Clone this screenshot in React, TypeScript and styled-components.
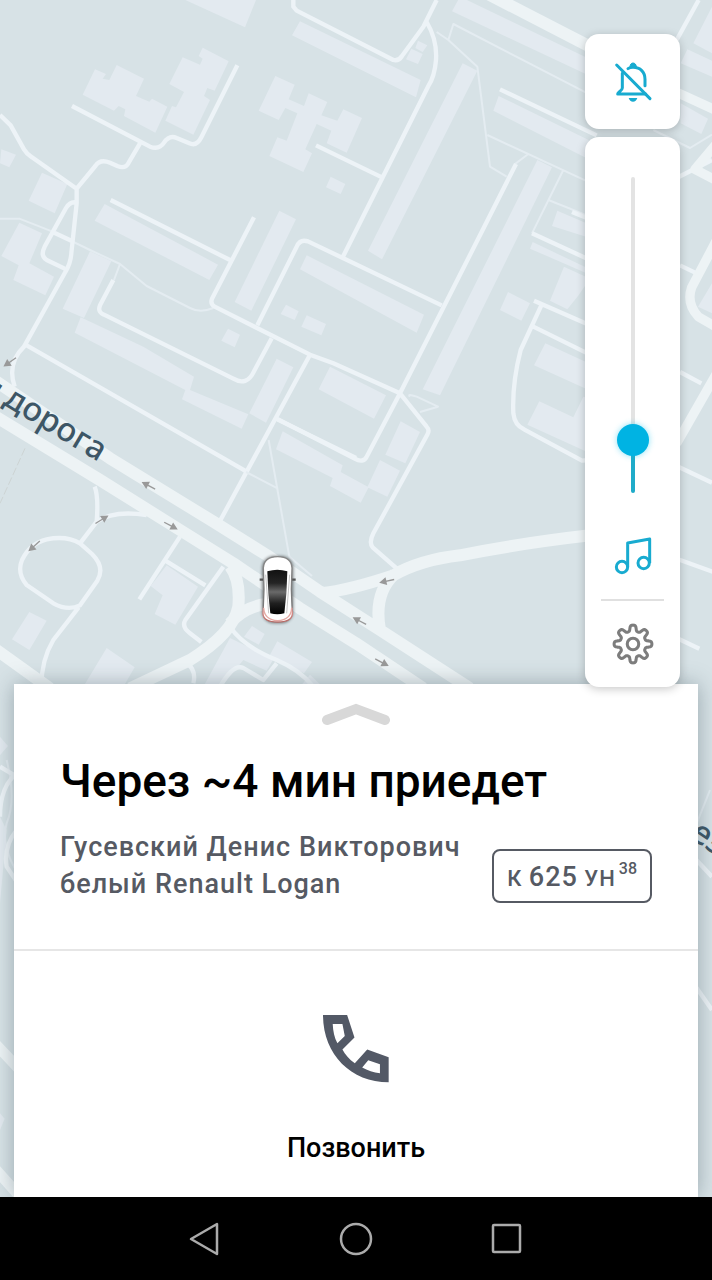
import React, { useState } from 'react';
import styled, { createGlobalStyle } from 'styled-components';

const GlobalStyle = createGlobalStyle`
  *, *::before, *::after { box-sizing: border-box; }
  body {
    margin: 0;
    background: #d7e2e6;
    font-family: Roboto, "Noto Sans", sans-serif;
    -webkit-font-smoothing: antialiased;
  }
  button { font: inherit; color: inherit; }
`;

const Screen = styled.div`
  position: relative;
  display: flex;
  flex-direction: column;
  min-height: 100vh;
  overflow: hidden;
`;

const MapCanvas = styled.svg`
  position: absolute;
  inset: 0;
  width: 100%;
  height: 100%;
  background: #d7e2e6;
`;

const Controls = styled.aside`
  position: relative;
  z-index: 2;
  flex: 1;
  display: flex;
  flex-direction: column;
  align-items: flex-end;
  gap: 8px;
  padding: 34px 32px 0;
`;

const FloatingCard = styled.div`
  display: flex;
  flex-direction: column;
  align-items: center;
  width: 95px;
  border-radius: 14px;
  background: #fff;
  box-shadow: 0 2px 10px rgba(0, 0, 0, 0.22);
`;

const IconButton = styled.button<{ $height: number; $color: string }>`
  display: flex;
  align-items: center;
  justify-content: center;
  width: 100%;
  height: ${(p) => p.$height}px;
  padding: 0;
  border: 0;
  background: none;
  color: ${(p) => p.$color};
  cursor: pointer;
`;

const SliderSlot = styled.div`
  padding: 40px 0 19px;
  display: flex;
`;

const VolumeSlider = styled.input`
  appearance: none;
  writing-mode: vertical-lr;
  direction: rtl;
  width: 33px;
  height: 316px;
  margin: 0;
  background: none;
  cursor: pointer;

  &::-webkit-slider-runnable-track {
    width: 4px;
    height: 100%;
    border-radius: 2px;
    background: linear-gradient(to top, #1fabc9 var(--level), #e3e3e3 var(--level));
  }
  &::-webkit-slider-thumb {
    appearance: none;
    width: 32px;
    height: 32px;
    margin-left: -14px;
    border-radius: 50%;
    background: #00b3e3;
    box-shadow: 0 0 6px rgba(0, 190, 235, 0.45);
  }
`;

const CardDivider = styled.hr`
  width: 63px;
  height: 2px;
  margin: 0;
  border: 0;
  background: #e0e0e0;
`;

const Sheet = styled.main`
  position: relative;
  z-index: 1;
  margin: -4px 14px 0;
  background: #fff;
  box-shadow: 0 0 20px rgba(60, 80, 90, 0.4);
`;

const Summary = styled.section`
  display: flex;
  flex-direction: column;
  padding: 0 46px 46px;
  border-bottom: 2px solid #e6e6e6;
`;

const ExpandButton = styled.button`
  display: flex;
  align-self: center;
  padding: 18px 0 26px;
  border: 0;
  background: none;
  cursor: pointer;
`;

const Title = styled.h1`
  margin: 0;
  font-size: 46px;
  line-height: 56px;
  font-weight: 500;
  color: #000;
`;

const DetailsRow = styled.div`
  display: flex;
  align-items: flex-end;
  justify-content: space-between;
  gap: 16px;
  margin-top: 20px;
  color: #565a63;
`;

const Driver = styled.p`
  margin: 0;
  font-size: 27px;
  line-height: 37px;
  font-weight: 500;
  letter-spacing: 1px;
`;

const Plate = styled.div`
  display: flex;
  flex: none;
  gap: 3px;
  height: 54px;
  padding: 0 13px;
  border: 2px solid #565a63;
  border-radius: 8px;
  font-size: 27px;
  line-height: 52px;
  font-weight: 500;
  letter-spacing: 1px;
`;

const PlateLetters = styled.span`
  font-size: 22px;
  text-transform: uppercase;
  white-space: pre;
`;

const Region = styled.span`
  font-size: 16px;
  line-height: 36px;
  letter-spacing: 0;
`;

const CallButton = styled.button`
  display: flex;
  flex-direction: column;
  align-items: center;
  gap: 49px;
  width: 100%;
  padding: 64px 0 33px;
  border: 0;
  background: none;
  font-size: 27px;
  line-height: 32px;
  font-weight: 500;
  color: #000;
  cursor: pointer;
`;

const SystemBar = styled.nav`
  position: relative;
  z-index: 2;
  display: flex;
  justify-content: center;
  height: 83px;
  background: #000;
`;

const SystemButton = styled.button`
  display: flex;
  align-items: center;
  justify-content: center;
  width: 151px;
  padding: 0;
  border: 0;
  background: none;
  color: #ababab;
  cursor: pointer;
`;

const BellOffIcon = () => (
  <svg width="40" height="40" viewBox="98 94 120 120" fill="none" stroke="currentColor" strokeWidth="9" strokeLinecap="round" strokeLinejoin="round" aria-hidden="true">
    <path d="M109 103 209 204" strokeWidth="9" />
    <path d="M126 128v44c0 8-14 12-14 18h84" />
    <path d="M194 165v-19c0-22-14-36-36-36-6 0-11 1-15 4" />
    <path d="M149 108c0-7 4-11 9-11s10 4 10 11z" fill="currentColor" strokeWidth="3" />
    <path d="M145 202h26c-2 7-7 11-13 11s-11-4-13-11z" fill="currentColor" stroke="none" />
  </svg>
);

const MusicIcon = () => (
  <svg width="40" height="40" viewBox="99 408 120 120" fill="none" stroke="currentColor" strokeWidth="9" strokeLinejoin="round" aria-hidden="true">
    <circle cx="126" cy="501" r="17" />
    <circle cx="191" cy="489" r="17" />
    <path d="M143 501v-72l66-12v72" />
  </svg>
);

const gearOutline = Array.from({ length: 160 }, (_, i) => {
  const angle = (i / 160) * Math.PI * 2;
  const radius = 47 + 9 * Math.tanh(2 * Math.cos(8 * angle));
  return `${(62 + radius * Math.sin(angle)).toFixed(1)},${(62 - radius * Math.cos(angle)).toFixed(1)}`;
}).join(' ');

const GearIcon = () => (
  <svg width="42" height="42" viewBox="0 0 124 124" fill="none" stroke="currentColor" strokeWidth="9" strokeLinejoin="round" aria-hidden="true">
    <polygon points={gearOutline} />
    <circle cx="62" cy="62" r="17" />
  </svg>
);

const PhoneIcon = () => (
  <svg width="67" height="68" viewBox="130 226 200 203" fill="currentColor" fillRule="evenodd" color="#535966" aria-hidden="true">
    <path d="M130 226h72l22 67-36 36c8 16 20 29 37 41l37-41 64 23v75C213 427 130 343 130 226ZM159 253c1 22 5 41 14 57l22-21-7-36ZM247 383c16 9 34 15 53 17v-27l-35-12Z" />
  </svg>
);

type Tile = {
  x: number;
  y: number;
  avenueWidth: number;
  buildings: string[];
  lanes: string[];
  streets: string[];
  avenues: string[];
};

/* Map geometry, grouped by district; coordinates are local to each district's origin. */
const districts: Tile[] = [
  {
    x: 0,
    y: 0,
    avenueWidth: 36,
    buildings: [
      'M556 0 735 82 768 0Z',
      'M285 208 318 222 308 236 328 240 350 195 432 236 408 288 448 305 456 296 502 320 466 398 372 348 376 328 356 318 342 332 248 284Z',
      'M548 172 600 194 608 176 596 168 608 143 686 184 644 272 622 264 612 288 630 300 580 404 496 362 516 318 528 322 552 276 508 252Z',
      'M826 228 884 254 866 298 912 318 926 280 982 306 964 346 1012 362 1030 328 1086 354 1040 458 980 430 994 392 950 372 916 448 936 460 910 516 808 468 832 412 860 422 892 340 856 324 836 360 776 332Z',
      'M992 530 1036 552 1022 582 978 562Z',
      'M4 448 48 464 28 502 0 490Z',
      'M126 518 202 552 164 640 86 602Z',
      'M58 668 126 700 88 790 162 830 136 886 40 840 56 796 4 768Z',
      'M314 612 654 794 628 840 284 662Z',
      'M838 632 888 658 754 932 704 906Z',
      'M270 754 334 784 252 954 188 926Z',
      'M242 952 430 1040 582 1130 570 1170 745 1243 725 1286 546 1198 556 1170 224 998Z',
      'M858 914 896 934 884 960 842 942Z',
      'M920 946 978 972 964 1006 904 980Z',
      'M684 986 720 1004 704 1042 664 1022Z',
    ],
    lanes: ['M0 656h58L150 692 270 750 360 792 440 858 570 924Q600 940 640 924', 'M360 792 342 840', 'M1310 96 1345 120 1360 72 1770 284', 'M1345 120 1432 200 1470 500 1520 530', 'M1462 405 1770 548', 'M1545 492 1585 462', 'M1690 510 1596 700', 'M1645 600 1770 650'],
    streets: [
      'M0 345 32 376 72 448Q80 462 96 472L230 566V610L214 760Q212 790 196 816L72 1040Q20 1090 44 1160',
      'M230 566 286 498Q300 476 330 488L352 498Q376 508 386 488L420 430',
      'M216 318 450 440Q478 450 492 428 508 404 530 414L568 430Q590 440 604 412L712 196',
      'M228 607Q210 604 198 624L134 740Q120 768 140 780L194 806',
      'M158 696 214 722',
      'M332 600 690 780',
      'M762 652 636 896Q630 912 644 920L930 1064 1000 1090 1200 1180 1280 1280Q1290 1290 1282 1304L1120 1600Q1106 1628 1118 1642L1190 1705',
      'M772 976 890 740Q900 716 924 724L1325 916',
      'M340 840 300 916Q292 936 312 944L700 1136Q740 1160 762 1114L815 1015',
      'M1030 768 1284 260Q1304 230 1308 180 1312 120 1280 66',
      'M880 0V20L890 32 1180 180Q1196 184 1206 168L1270 80 1310 0',
      'M948 436 1146 532',
      'M1548 492 1200 1180 1100 1370Q1090 1390 1064 1376L830 1256',
      'M1500 268 1790 406',
      'M930 1064 655 1572',
      'M80 1036 740 1415',
    ],
    avenues: ['M1460 -20 1770 140'],
  },
  {
    x: 900,
    y: 0,
    avenueWidth: 28,
    buildings: [
      'M0 64 362 240 348 292 -24 106Z',
      'M480 -10 870 178 870 228 456 34Z',
      'M488 190 532 212 246 778 204 752Z',
      'M712 480 756 502 420 1186 368 1168Z',
      'M596 288 866 420 866 478 580 332Z',
      'M20 766 372 944 350 998 0 808Z',
      'M354 122 382 136 368 156 346 144Z',
      'M334 146 368 162 354 192 318 178Z',
      'M772 632 870 674 870 714 756 678Z',
      'M698 726 870 808 870 824 690 746Z',
      'M792 800 870 836 834 888 802 928 750 902Z',
      'M624 876 690 910 664 962 600 930Z',
      'M736 1030 866 1090 866 1170 702 1096Z',
      'M718 1204 820 1252 850 1190 870 1198V1360L682 1274Z',
      'M1236 20V160L1180 130Z',
      'M1162 148 1236 182V230L1142 190Z',
      'M1142 310 1224 356 1204 402 1142 370Z',
      'M1236 850V940L1194 920Z',
      'M90 1100 258 1186 222 1256 56 1168Z',
      'M302 1264 360 1296 316 1390 256 1364Z',
      'M240 1380 300 1412 262 1490 202 1462Z',
      'M-52 1294 128 1396 122 1416 206 1462 182 1508 90 1458 98 1434 -72 1348Z',
    ],
    lanes: ['M1060 390 1170 444 1236 404', 'M330 1190Q320 1180 350 1190L414 1220 360 1236'],
    streets: [
      'M1196 0 1130 120',
      'M816 636 870 658',
      'M696 700 870 780',
      'M702 902 870 976',
      'M725 914 662 1050Q636 1150 640 1240 644 1276 672 1288L846 1382 870 1380',
      'M700 980 870 1064',
      'M1130 534 1236 480',
      'M1140 796 1190 820',
      'M1140 1116 1204 1150',
      'M1130 1398 1236 1448',
      'M1130 1676 1240 1716',
      'M1130 1914 1198 1946',
    ],
    avenues: ['M1120 272 1250 332', 'M1250 430 1185 508 1250 542', 'M1250 720 1175 862Q1158 910 1195 950L1250 982', 'M1250 1120 1130 1330'],
  },
  {
    x: 0,
    y: 990,
    avenueWidth: 36,
    buildings: [
      'M830 86 880 112 798 278 748 250Z',
      'M500 706 594 770 526 884 464 852 488 796 452 768Z',
      'M88 846 140 872 88 960 36 928Z',
      'M320 954 404 1012 370 1070H250Z',
      'M690 924 820 988 800 1022 730 990 664 1070H610Z',
      'M756 888 794 912 776 944 732 920Z',
      'M832 934 936 996 912 1030 808 978Z',
      'M930 1034 968 1070H900Z',
    ],
    lanes: ['M806 330 868 680 936 738', 'M738 426 834 476'],
    streets: [
      'M832 268 1068 384',
      'M284 470Q296 500 290 575L240 640',
      'M290 575Q340 540 440 555',
      'M240 640Q200 616 140 628 90 640 66 690 50 730 80 765L160 820Q204 844 240 826L292 752Q316 712 276 672L240 640',
      'M236 832 160 930Q124 990 124 1070',
      'M540 620 418 808',
      'M496 692 616 766',
      'M670 710 556 870Q544 890 570 910L604 936',
      'M690 890Q730 950 830 990 900 1020 940 1070',
      'M830 1000 790 1050 730 1014Q700 1000 660 1070',
      'M560 1000Q590 1020 580 1060',
    ],
    avenues: [
      'M-10 155 330 385 640 575 800 675 960 785 1140 900 1410 1075',
      'M-10 262 300 450 540 600 700 700 900 835 1068 940 1270 1075',
      'M-10 960 150 1075',
      'M390 1075 570 990Q700 910 715 830 722 750 690 708',
      'M690 880Q740 820 830 820',
      'M960 790Q1050 780 1180 736 1260 690 1380 676 1560 640 1770 616',
      'M1184 732Q1120 790 1140 900',
    ],
  },
  {
    x: 0,
    y: 2070,
    avenueWidth: 32,
    buildings: ['M0 140 24 168 0 196Z', 'M0 380 20 420 0 640Z', 'M0 1270 14 1286 0 1320Z'],
    lanes: ['M20 210Q50 330 20 400 0 470 60 560', 'M2130 300 2090 400'],
    streets: ['M0 230 50 260', 'M50 250Q0 290 0 380', 'M50 420Q10 470 20 530L60 590', 'M2080 500 2136 560', 'M2080 880 2136 960'],
    avenues: ['M-20 1055 60 1140', 'M-20 1430 60 1520'],
  },
];

const directionArrows = [
  { x: 30, y: 1086, angle: 145 },
  { x: 446, y: 1457, angle: 208 },
  { x: 512, y: 1577, angle: 28 },
  { x: 305, y: 1559, angle: -32 },
  { x: 103, y: 1638, angle: 138 },
  { x: 1161, y: 1743, angle: 168 },
  { x: 1079, y: 1863, angle: 208 },
  { x: 1145, y: 1987, angle: 28 },
];

const CityMap = () => (
  <MapCanvas viewBox="0 0 2136 3840" preserveAspectRatio="xMidYMin slice" role="img" aria-label="Карта">
    <defs>
      <linearGradient id="glass" x1="0" y1="0" x2="0" y2="1">
        <stop offset="0" stopColor="#111" />
        <stop offset="0.3" stopColor="#242424" />
        <stop offset="0.5" stopColor="#6a6a6a" />
        <stop offset="0.75" stopColor="#202020" />
        <stop offset="1" stopColor="#000" />
      </linearGradient>
      <linearGradient id="body" x1="0" y1="0" x2="0" y2="1">
        <stop offset="0" stopColor="#888" />
        <stop offset="0.75" stopColor="#777" />
        <stop offset="0.85" stopColor="#d98a86" />
        <stop offset="1" stopColor="#b56a66" />
      </linearGradient>
      <filter id="carShadow" x="-30%" y="-20%" width="160%" height="140%">
        <feGaussianBlur stdDeviation="5" />
      </filter>
    </defs>
    <g fill="#e3eaf0">
      {districts.map((d) => (
        <path key={`${d.x}-${d.y}`} transform={`translate(${d.x} ${d.y})`} d={d.buildings.join('')} />
      ))}
    </g>
    <g fill="none" stroke="#edf3f7" strokeLinejoin="round">
      {districts.map((d) => (
        <g key={`${d.x}-${d.y}`} transform={`translate(${d.x} ${d.y})`}>
          <path d={d.lanes.join('')} stroke="#e4ecf1" strokeWidth="6" />
          <path d={d.streets.join('')} strokeWidth="13" />
          <path d={d.avenues.join('')} stroke="#edf3f5" strokeWidth={d.avenueWidth} />
        </g>
      ))}
    </g>
    <path d="M75 1345 0 1510" stroke="#cdd4d4" strokeWidth="3" strokeDasharray="24 8" />
    <g stroke="#999" fill="#999" strokeWidth="4">
      {directionArrows.map((a) => (
        <g key={`${a.x}-${a.y}`} transform={`translate(${a.x} ${a.y}) rotate(${a.angle})`}>
          <path d="M-22 0H8" />
          <path d="M2-12 24 0 2 12Z" stroke="none" />
        </g>
      ))}
    </g>
    <g fill="#3d5666" fontFamily="'Noto Sans', sans-serif" fontSize="98" fontWeight="500">
      <text transform="translate(-16 1206) rotate(34)" textAnchor="end">я</text>
      <text transform="translate(296 1386) rotate(31)" textAnchor="end">дорога</text>
      <text transform="translate(2066 2512) rotate(34)">ез</text>
    </g>
    <g transform="translate(0 990)">
      <rect x="786" y="678" width="94" height="202" rx="36" fill="#000" opacity="0.45" filter="url(#carShadow)" />
      <path d="M779 749h108" stroke="#555" strokeWidth="7" />
      <path d="M790 714q2-34 43-34t43 34l-2 64 3 74q-2 24-44 24t-44-24l3-74Z" fill="#fff" stroke="url(#body)" strokeWidth="4" />
      <path d="M802 724q30-10 60 0-1 66-9 126-21 6-42 0-8-60-9-126Z" fill="url(#glass)" />
      <path d="M797 734 806 850M869 734 860 850" stroke="#aaa" strokeWidth="2" />
      <path d="M791 834q2 36 42 38 40-2 42-38" fill="none" stroke="#e3a9a4" strokeWidth="4" />
    </g>
  </MapCanvas>
);

export default function App() {
  const [volume, setVolume] = useState(13);
  const level = { '--level': `calc(16px + (100% - 32px) * ${volume / 100})` } as React.CSSProperties;

  return (
    <Screen>
      <GlobalStyle />
      <CityMap />
      <Controls>
        <FloatingCard>
          <IconButton $height={95} $color="#18abd0" aria-label="Выключить уведомления">
            <BellOffIcon />
          </IconButton>
        </FloatingCard>
        <FloatingCard>
          <SliderSlot>
            <VolumeSlider
              type="range"
              min={0}
              max={100}
              value={volume}
              style={level}
              aria-label="Громкость"
              onChange={(e) => setVolume(Number(e.target.value))}
            />
          </SliderSlot>
          <IconButton $height={87} $color="#18abd0" aria-label="Музыка">
            <MusicIcon />
          </IconButton>
          <CardDivider />
          <IconButton $height={86} $color="#7d7d7d" aria-label="Настройки">
            <GearIcon />
          </IconButton>
        </FloatingCard>
      </Controls>
      <Sheet>
        <Summary>
          <ExpandButton aria-label="Развернуть">
            <svg width="70" height="25" viewBox="0 0 70 25" fill="none" stroke="#d8d8d8" strokeWidth="10" strokeLinecap="round" aria-hidden="true">
              <path d="M6 18 35 7l29 11" />
            </svg>
          </ExpandButton>
          <Title>Через ~4 мин приедет</Title>
          <DetailsRow>
            <Driver>
              Гусевский Денис Викторович
              <br />
              белый Renault Logan
            </Driver>
            <Plate>
              <span>
                <PlateLetters>к </PlateLetters>
                625
                <PlateLetters> ун</PlateLetters>
              </span>
              <Region>38</Region>
            </Plate>
          </DetailsRow>
        </Summary>
        <CallButton>
          <PhoneIcon />
          Позвонить
        </CallButton>
      </Sheet>
      <SystemBar aria-label="Системная навигация">
        <SystemButton aria-label="Назад">
          <svg width="32" height="36" viewBox="0 0 32 36" fill="none" stroke="currentColor" strokeWidth="2.5" strokeLinejoin="round" aria-hidden="true">
            <path d="M28 3v30L2 18Z" />
          </svg>
        </SystemButton>
        <SystemButton aria-label="Домой">
          <svg width="34" height="34" viewBox="0 0 34 34" fill="none" stroke="currentColor" strokeWidth="2.5" aria-hidden="true">
            <circle cx="17" cy="17" r="15" />
          </svg>
        </SystemButton>
        <SystemButton aria-label="Недавние">
          <svg width="32" height="32" viewBox="0 0 32 32" fill="none" stroke="currentColor" strokeWidth="2.5" aria-hidden="true">
            <rect x="2" y="2" width="27" height="27" rx="1" />
          </svg>
        </SystemButton>
      </SystemBar>
    </Screen>
  );
}
